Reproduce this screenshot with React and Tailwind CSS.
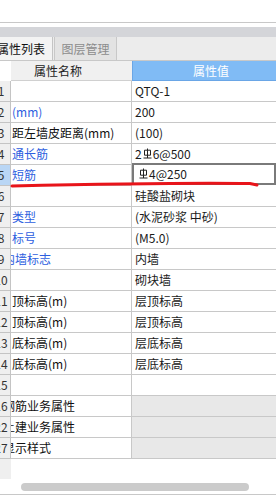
import React from "react";

const FONT = { fontFamily: '"Noto Sans CJK SC", "Microsoft YaHei", sans-serif' };

function Rebar() {
  return (
    <svg width="9" height="12" viewBox="0 0 9 12" className="inline-block align-[-1px] mx-[1px]">
      <path d="M1.5 2.2 H7.5 V7.2 H1.5 Z" fill="none" stroke="#222" strokeWidth="1" />
      <path d="M4.5 0.5 V10" stroke="#222" strokeWidth="1" />
      <path d="M0.5 10 H8.5" stroke="#222" strokeWidth="1" />
    </svg>
  );
}

const rows = [
  { n: "1", name: "", v: "QTQ-1" },
  { n: "2", name: "(mm)", blue: true, v: "200" },
  { n: "3", name: "距左墙皮距离(mm)", v: "(100)" },
  { n: "4", name: "通长筋", blue: true, v: <>2<Rebar />6@500</> },
  { n: "5", name: "短筋", blue: true, v: <><Rebar />4@250</>, sel: true },
  { n: "6", name: "", v: "硅酸盐砌块" },
  { n: "7", name: "类型", blue: true, v: "(水泥砂浆 中砂)" },
  { n: "8", name: "标号", blue: true, v: "(M5.0)" },
  { n: "9", name: "内墙标志", blue: true, v: "内墙", clip: true },
  { n: "10", name: "", v: "砌块墙" },
  { n: "11", name: "顶标高(m)", v: "层顶标高" },
  { n: "12", name: "顶标高(m)", v: "层顶标高" },
  { n: "13", name: "底标高(m)", v: "层底标高" },
  { n: "14", name: "底标高(m)", v: "层底标高" },
  { n: "15", name: "", v: "" },
  { n: "16", name: "钢筋业务属性", v: "", group: true, clip: true },
  { n: "22", name: "土建业务属性", v: "", group: true, clip: true },
  { n: "27", name: "显示样式", v: "", group: true, clip: true },
];

export default function App() {
  return (
    <div className="relative w-[276px] h-[495px] overflow-hidden bg-white text-[12px] text-[#1a1a1a]" style={FONT}>
      {/* top area */}
      <div className="h-[22px] bg-white" />
      <div className="h-[1px] bg-[#c8c8c8]" />
      <div className="h-[4px] bg-white" />
      <div className="h-[10px] bg-[#d4d5d9]" />
      {/* tabs strip */}
      <div className="h-[24px] bg-[#ececec] flex items-stretch border-b border-[#c8c8c8]">
        <div className="w-[53px] overflow-hidden bg-[#f3f3f3] border-r border-[#c4c4c4] flex items-center">
          <span className="whitespace-nowrap -ml-[3px] leading-none text-[#111]">属性列表</span>
        </div>
        <div className="w-[1px]" />
        <div className="w-[63px] bg-[#e3e3e3] border-x border-[#c8c8c8] flex items-center justify-center">
          <span className="whitespace-nowrap leading-none text-[#8c8c8c]">图层管理</span>
        </div>
      </div>
      {/* header */}
      <div className="grid grid-cols-[11px_121px_1fr] h-[20px]">
        <div className="bg-white" />
        <div className="bg-[#f0f0f0] border-b border-[#d0d0d0] flex items-center pl-[23px] leading-none text-[#222]">属性名称</div>
        <div className="bg-[#80bbf5] border-l border-[#6aa6e6] border-b border-[#5f9de0] flex items-center pl-[60px] leading-none text-white">属性值</div>
      </div>
      {/* rows */}
      {rows.map((r, i) => (
        <div key={i} className="grid grid-cols-[11px_121px_1fr] h-[21px]">
          <div className={`overflow-hidden border-r border-b border-[#c4c4c4] flex items-center ${r.sel ? "bg-[#b9d6f5]" : "bg-[#efefef]"}`}>
            <div className="w-[24px] -ml-[11px] shrink-0 text-center leading-none text-[#333]">{r.n}</div>
          </div>
          <div className="overflow-hidden border-r border-b border-[#c8c8c8] bg-white flex items-center">
            <span className={`whitespace-nowrap leading-none ${r.clip ? "-ml-[8px]" : "ml-[1px]"} ${r.blue ? "text-[#2d5ee0]" : "text-[#111]"}`}>{r.name}</span>
          </div>
          {r.sel ? (
            <div className="border-2 border-[#7a7a7a] bg-white flex items-center pl-[4px] leading-none -mt-[2px] h-[22px] whitespace-nowrap">{r.v}</div>
          ) : (
            <div className={`border-b border-[#c8c8c8] flex items-center pl-[3px] leading-none whitespace-nowrap ${r.group ? "bg-[#e8e8e8]" : "bg-white"}`}>{r.v}</div>
          )}
        </div>
      ))}
      {/* below table */}
      <div className="h-[20px] flex">
        <div className="w-[11px] bg-[#efefef]" />
      </div>
      <div className="h-[4px]" />
      <div className="h-[8px] ml-[21px] w-[228px] rounded-full bg-[#cbcbcb]" />
      <div className="h-[3px]" />
      <div className="h-[1px] bg-[#c8c8c8]" />

      {/* red annotation */}
      <svg className="absolute left-0 top-0 pointer-events-none" width="276" height="495">
        <path d="M12 186 C 80 184.5, 180 182.5, 250 183.5 L 257 185" fill="none" stroke="#e8141a" strokeWidth="3" strokeLinecap="round" />
      </svg>
    </div>
  );
}
